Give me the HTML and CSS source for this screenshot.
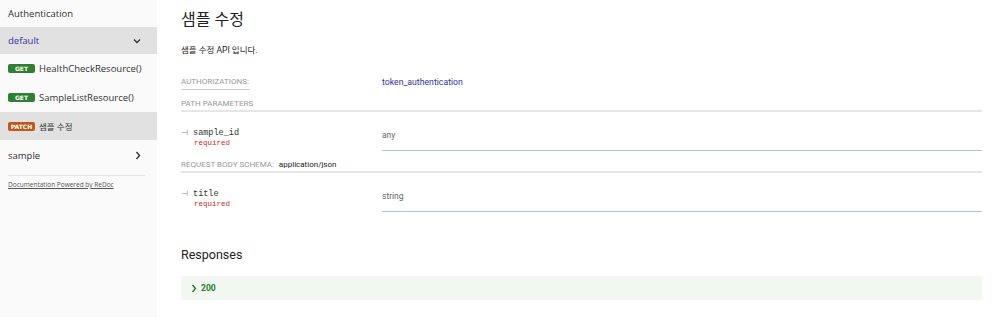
FILE: index.html
```html
<!DOCTYPE html>
<html>
<head>
    <meta charset="UTF-8">
    <title>ReDoc</title>
    <link rel="stylesheet" href="styles.css">
</head>
<body>
    <div class="menu">
        <div class="menu-item plain">Authentication</div>
        <div class="menu-item active group">
            <span class="group-name">default</span>
            <svg class="chev" width="8" height="6" viewBox="0 0 8 6"><path d="M1 1.5 L4 4.5 L7 1.5" fill="none" stroke="#333" stroke-width="1.3"/></svg>
        </div>
        <div class="menu-item op">
            <span class="badge get">GET</span><span class="op-name">HealthCheckResource()</span>
        </div>
        <div class="menu-item op">
            <span class="badge get">GET</span><span class="op-name">SampleListResource()</span>
        </div>
        <div class="menu-item op active">
            <span class="badge patch">PATCH</span><span class="op-name kr">샘플 수정</span>
        </div>
        <div class="menu-item plain tag">
            <span>sample</span>
            <svg class="chev" width="6" height="9" viewBox="0 0 6 9"><path d="M1.5 1 L4.5 4.5 L1.5 8" fill="none" stroke="#333" stroke-width="1.4"/></svg>
        </div>
        <div class="menu-footer">
            <a href="#">Documentation Powered by ReDoc</a>
        </div>
    </div>

    <div class="content">
        <h2 class="op-title">샘플 수정</h2>
        <p class="op-desc">샘플 수정 API 입니다.</p>

        <div class="auth-row">
            <span class="auth-label">AUTHORIZATIONS:</span>
            <span class="auth-value">token_authentication</span>
        </div>

        <div class="section-head">PATH PARAMETERS</div>
        <div class="param">
            <div class="param-name">
                <div class="name-line"><span class="tick">⊣</span> sample_id</div>
                <div class="required">required</div>
            </div>
            <div class="param-type">any</div>
        </div>

        <div class="section-head">REQUEST BODY SCHEMA: <span class="mime">application/json</span></div>
        <div class="param">
            <div class="param-name">
                <div class="name-line"><span class="tick">⊣</span> title</div>
                <div class="required">required</div>
            </div>
            <div class="param-type">string</div>
        </div>

        <h3 class="responses">Responses</h3>
        <div class="response ok">
            <svg width="6" height="9" viewBox="0 0 6 9"><path d="M1.5 1 L4.5 4.5 L1.5 8" fill="none" stroke="#1d8127" stroke-width="1.4"/></svg>
            <strong>200</strong>
        </div>
    </div>
</body>
</html>
```

FILE: styles.css
```css
body {
    margin: 0;
    padding: 0;
    display: flex;
    height: 317px;
    overflow: hidden;
    font-family: Roboto, "Noto Sans CJK KR", sans-serif;
    color: #333;
    background: #fff;
}

.menu {
    width: 157px;
    flex-shrink: 0;
    background-color: #fafafa;
    font-family: "Open Sans", "Noto Sans CJK KR", sans-serif;
    font-size: 9.5px;
    color: #333;
}

.menu-item {
    display: flex;
    align-items: center;
    padding: 0 8px;
    height: 27px;
}

.menu-item.op {
    height: 29px;
}

.menu-item.active {
    background-color: #e1e1e1;
}

.menu-item.op.active {
    height: 28px;
}

.menu-item.tag {
    height: 30px;
}

.menu-item.plain {
    justify-content: space-between;
}

.group {
    justify-content: space-between;
}

.group-name {
    color: #32329f;
}

.chev {
    margin-right: 8px;
}

.badge {
    display: inline-block;
    width: 27px;
    height: 9px;
    line-height: 9px;
    border-radius: 2px;
    color: #fff;
    font-family: "DejaVu Sans", sans-serif;
    font-weight: bold;
    font-size: 6px;
    text-align: center;
    margin-right: 4px;
}

.badge.get {
    background-color: #2f8132;
}

.badge.patch {
    background-color: #bf581d;
}

.op-name.kr {
    font-size: 8.5px;
}

.menu-footer {
    margin: 5px 12px 0 8px;
    padding-top: 1px;
    border-top: 1px solid #e4e4e4;
    font-size: 6.5px;
    line-height: 16px;
}

.menu-footer a {
    color: #555;
}

.content {
    flex: 1;
    padding: 9px 18px 0 24px;
    font-size: 9px;
}

.op-title {
    margin: 0;
    font-size: 16px;
    line-height: 22px;
    font-weight: normal;
    color: #222;
}

.op-desc {
    margin: 13px 0 0;
    font-size: 8.5px;
    line-height: 12px;
    color: #222;
}

.auth-row {
    display: flex;
    margin-top: 20px;
    height: 21px;
    align-items: flex-start;
}

.auth-label {
    width: 69px;
    margin-right: 132px;
    color: #999;
    font-size: 8px;
    line-height: 12px;
    border-bottom: 1px solid #ccc;
    padding-bottom: 1px;
}

.auth-value {
    color: #32329f;
    font-size: 8.7px;
    line-height: 12px;
}

.section-head {
    line-height: 13px;
    font-size: 8px;
    color: #999;
    border-bottom: 2px solid #e6e6e6;
}

.mime {
    color: #222;
    margin-left: 3px;
}

.param {
    display: flex;
    padding-bottom: 7px;
}

.param-name {
    width: 201px;
    padding-top: 16px;
    font-family: "Liberation Mono", monospace;
    font-size: 8.5px;
    line-height: 10px;
    color: #333;
}

.tick {
    color: #7c8a9a;
    font-family: "DejaVu Sans", sans-serif;
    font-size: 8px;
}

.required {
    color: #d41f1c;
    font-size: 7.5px;
    padding-left: 13px;
}

.param-type {
    flex: 1;
    padding-top: 18px;
    height: 20px;
    border-bottom: 1px solid #b5c3c9;
    color: #666;
    font-size: 8.5px;
    line-height: 10px;
}

.responses {
    margin: 28px 0 0;
    font-size: 12.5px;
    line-height: 16px;
    font-weight: normal;
    color: #222;
}

.response {
    margin-top: 13px;
    height: 24px;
    display: flex;
    align-items: center;
    padding-left: 10px;
    gap: 4px;
    background-color: #f2f7f2;
    border-radius: 2px;
    color: #1d8127;
    font-size: 8.5px;
}
```
